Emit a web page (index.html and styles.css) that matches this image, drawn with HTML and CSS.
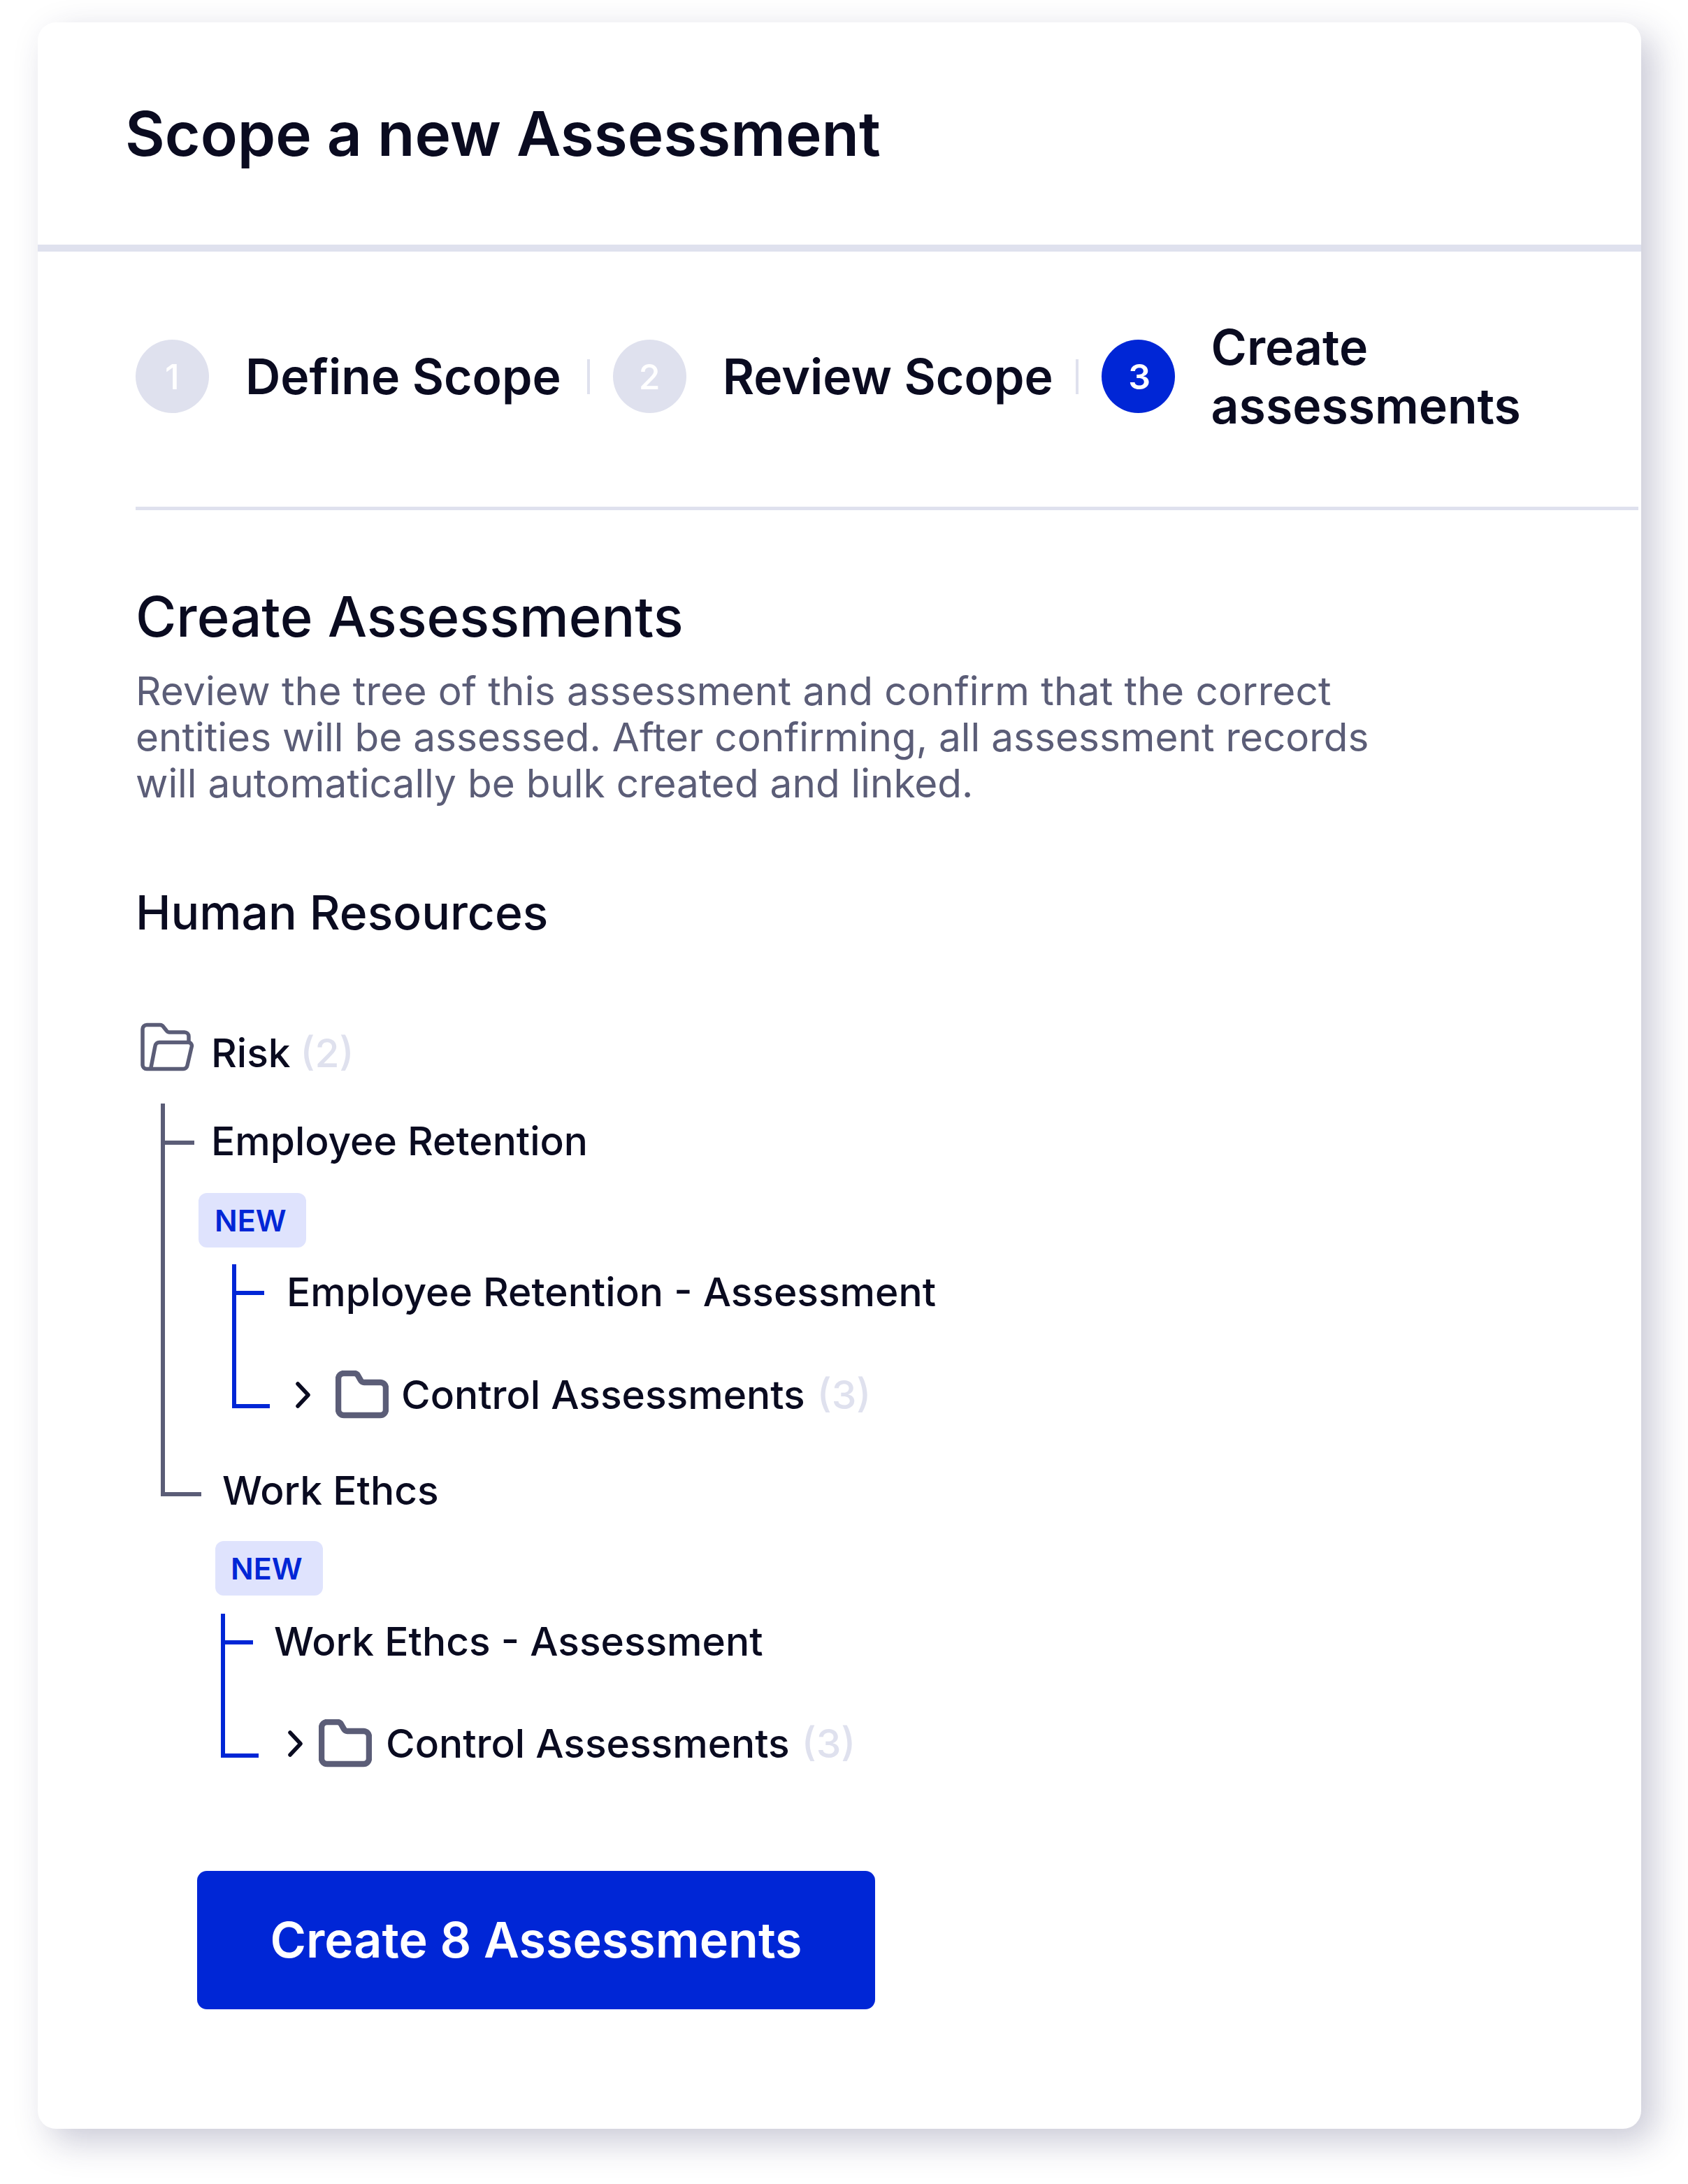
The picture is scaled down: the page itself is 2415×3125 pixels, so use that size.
FILE: index.html
```html
<!DOCTYPE html>
<html lang="en">
<head>
<meta charset="utf-8">
<title>Scope a new Assessment</title>
<link rel="stylesheet" href="styles.css">
</head>
<body>
<main class="card">
  <header class="card-head"><h1 class="title">Scope a new Assessment</h1></header>
  <div class="card-body">
    <ol class="steps">
      <li class="step"><span class="step-num">1</span><span class="step-label">Define Scope</span></li>
      <li class="step-sep"></li>
      <li class="step"><span class="step-num">2</span><span class="step-label">Review Scope</span></li>
      <li class="step-sep step-sep-last"></li>
      <li class="step"><span class="step-num step-num-active">3</span><span class="step-label step-label-wrap">Create assessments</span></li>
    </ol>
    <section class="intro">
      <h2 class="heading">Create Assessments</h2>
      <p class="desc"><span class="desc-wide">Review the tree of this assessment and confirm that the correct</span><br>entities will be assessed. After confirming, all assessment records<br>will automatically be bulk created and linked.</p>
      <h3 class="group">Human Resources</h3>
    </section>
    <div class="tree">
      <div class="row row-root">
        <svg class="icon-open" viewBox="0 0 74 66" fill="none"><path d="M68 26V18a6 6 0 0 0-6-6H40a5 5 0 0 1-4-2.5L32 4.500a6 6 0 0 0-5-3H8a6 6 0 0 0-6 6v51a6 6 0 0 0 6 6h52a6 6 0 0 0 6-5l6-26a5 5 0 0 0-5-7H26a6 6 0 0 0-6 5l-6 31"/></svg>
        <span class="text">Risk</span><span class="count">(2)</span>
      </div>
      <div class="branch">
        <div class="row row-first"><span class="text">Employee Retention</span></div>
        <span class="badge badge-first">NEW</span>
        <div class="sub sub-first">
          <div class="row row-sub"><span class="text">Employee Retention - Assessment</span></div>
          <div class="row row-control">
            <svg class="chevron" viewBox="0 0 22 38" fill="none"><path d="M3 3l15 16L3 35"/></svg>
            <svg class="folder" viewBox="0 0 76 70" fill="none"><path d="M4 12a8 8 0 0 1 8-8h15a6 6 0 0 1 5 3l4 7a6 6 0 0 0 5 3h23a8 8 0 0 1 8 8v31a8 8 0 0 1-8 8H12a8 8 0 0 1-8-8Z"/></svg>
            <span class="text">Control Assessments</span><span class="count">(3)</span>
          </div>
        </div>
        <div class="row row-second"><span class="text">Work Ethcs</span></div>
        <span class="badge badge-second">NEW</span>
        <div class="sub sub-second">
          <div class="row row-sub"><span class="text">Work Ethcs - Assessment</span></div>
          <div class="row row-control">
            <svg class="chevron" viewBox="0 0 22 38" fill="none"><path d="M3 3l15 16L3 35"/></svg>
            <svg class="folder" viewBox="0 0 76 70" fill="none"><path d="M4 12a8 8 0 0 1 8-8h15a6 6 0 0 1 5 3l4 7a6 6 0 0 0 5 3h23a8 8 0 0 1 8 8v31a8 8 0 0 1-8 8H12a8 8 0 0 1-8-8Z"/></svg>
            <span class="text">Control Assessments</span><span class="count">(3)</span>
          </div>
        </div>
      </div>
    </div>
    <button class="cta" type="button">Create 8 Assessments</button>
  </div>
</main>
</body>
</html>
```
FILE: styles.css
```css
* { box-sizing: border-box; }
html, body { margin: 0; padding: 0; background: #fff; }
body { font-family: Inter, "Liberation Sans", sans-serif; color: #0a0b20; width: 2415px; height: 3125px; overflow: hidden; }

.card { width: 2294px; height: 3014px; margin: 32px 0 0 54px; background: #fff; border-radius: 26px; box-shadow: 18px 18px 50px rgba(40, 40, 90, .25); display: flex; flex-direction: column; }
.card-head { height: 328px; border-bottom: 10px solid #dfe1ee; padding: 0 0 0 125px; display: flex; align-items: center; }
.title { margin: 0; font-size: 87.3px; font-weight: 600; line-height: 100px; }
.card-body { padding: 0 4px 0 140px; }

.steps { list-style: none; margin: 0; padding: 0 0 8px; height: 370px; border-bottom: 5px solid #dfe1ee; display: flex; align-items: center; }
.step { display: flex; align-items: center; }
.step-num { width: 105px; height: 105px; border-radius: 50%; background: #dfe1ee; color: #fff; font-size: 50px; font-weight: 500; display: flex; align-items: center; justify-content: center; flex: none; margin-right: 52px; }
.step-num-active { background: #0026d6; font-weight: 600; padding-left: 4px; }
.step-label { font-size: 69.7px; font-weight: 600; line-height: 84px; white-space: nowrap; }
.step-label-wrap { width: 470px; white-space: normal; }
.step-sep { width: 4px; height: 50px; background: #dfe1ee; margin: 0 33px 0 37px; }
.step-sep-last { margin-left: 32px; }

.intro { padding-top: 102px; }
.heading { margin: 0; font-size: 79.6px; font-weight: 500; line-height: 100px; }
.desc { margin: 24px 0 0; font-size: 56.7px; line-height: 66px; color: #5b5d77; }
.desc-wide { letter-spacing: .2px; }
.group { margin: 106px 0 0; font-size: 67.8px; font-weight: 500; line-height: 90px; }

.tree { position: relative; }
.row { display: flex; align-items: center; height: 80px; }
.text { font-size: 56.85px; font-weight: 500; line-height: 80px; white-space: nowrap; }
.count { font-size: 56.85px; font-weight: 500; line-height: 80px; color: #dfe1ee; margin-left: 17px; }
.row-root { margin-top: 117px; margin-left: 8px; }
.row-root .count { margin-left: 14px; }
.icon-open { width: 74px; height: 66px; margin: -18px 26px 0 0; overflow: visible; }
.icon-open path { stroke: #5b5d77; stroke-width: 5.5; stroke-linejoin: round; stroke-linecap: round; }

.branch { position: relative; margin-left: 36px; padding-top: 46px; }
.branch::before { content: ""; position: absolute; left: 0; top: 32px; width: 6px; height: 562px; background: #5b5d77; }
.row-first { margin-left: 72px; }
.row-first::before { content: ""; position: absolute; left: 0; top: 85px; width: 48px; height: 6px; background: #5b5d77; }
.badge { display: flex; align-items: center; width: 154px; height: 78px; border-radius: 12px; background: #dfe3fd; color: #0026d6; font-size: 43px; font-weight: 600; padding-left: 23px; }
.badge-first { margin: 34px 0 0 54px; }
.badge-second { margin: 32px 0 0 78px; padding-left: 22px; }
.sub { position: relative; }
.sub::before { content: ""; position: absolute; top: 0; left: 0; width: 6px; background: #0026d6; height: 206px; }
.sub-first { margin: 24px 0 0 102px; padding-left: 78px; }
.sub-second { margin: 26px 0 0 86px; padding-left: 76px; }
.sub::after { content: ""; position: absolute; left: 0; top: 200px; width: 54px; height: 6px; background: #0026d6; }
.row-sub { position: relative; }
.row-sub::before { content: ""; position: absolute; left: -78px; top: 38px; width: 46px; height: 6px; background: #0026d6; }
.sub-second .row-sub::before { left: -76px; }
.row-control { margin-top: 67px; margin-left: 13px; }
.chevron { width: 22px; height: 38px; margin-right: 35px; }
.sub-second .row-control { margin-top: 66px; margin-left: 20px; }
.sub-second .chevron { margin-right: 22px; }
.chevron path { stroke: #0a0b20; stroke-width: 5.5; stroke-linecap: round; stroke-linejoin: round; }
.folder { width: 76px; height: 70px; margin-right: 18px; }
.sub-second .folder { margin-right: 20px; }
.folder path { stroke: #5b5d77; stroke-width: 8.5; stroke-linejoin: round; }
.row-second { margin-left: 88px; margin-top: 57px; }
.row-second::before { content: ""; position: absolute; left: 0; top: 588px; width: 58px; height: 6px; background: #5b5d77; }

.cta { display: block; width: 970px; height: 198px; margin: 142px 0 0 88px; border: 0; border-radius: 14px; background: #0026d6; color: #fff; font: 600 70px/1 Inter, "Liberation Sans", sans-serif; }
```
